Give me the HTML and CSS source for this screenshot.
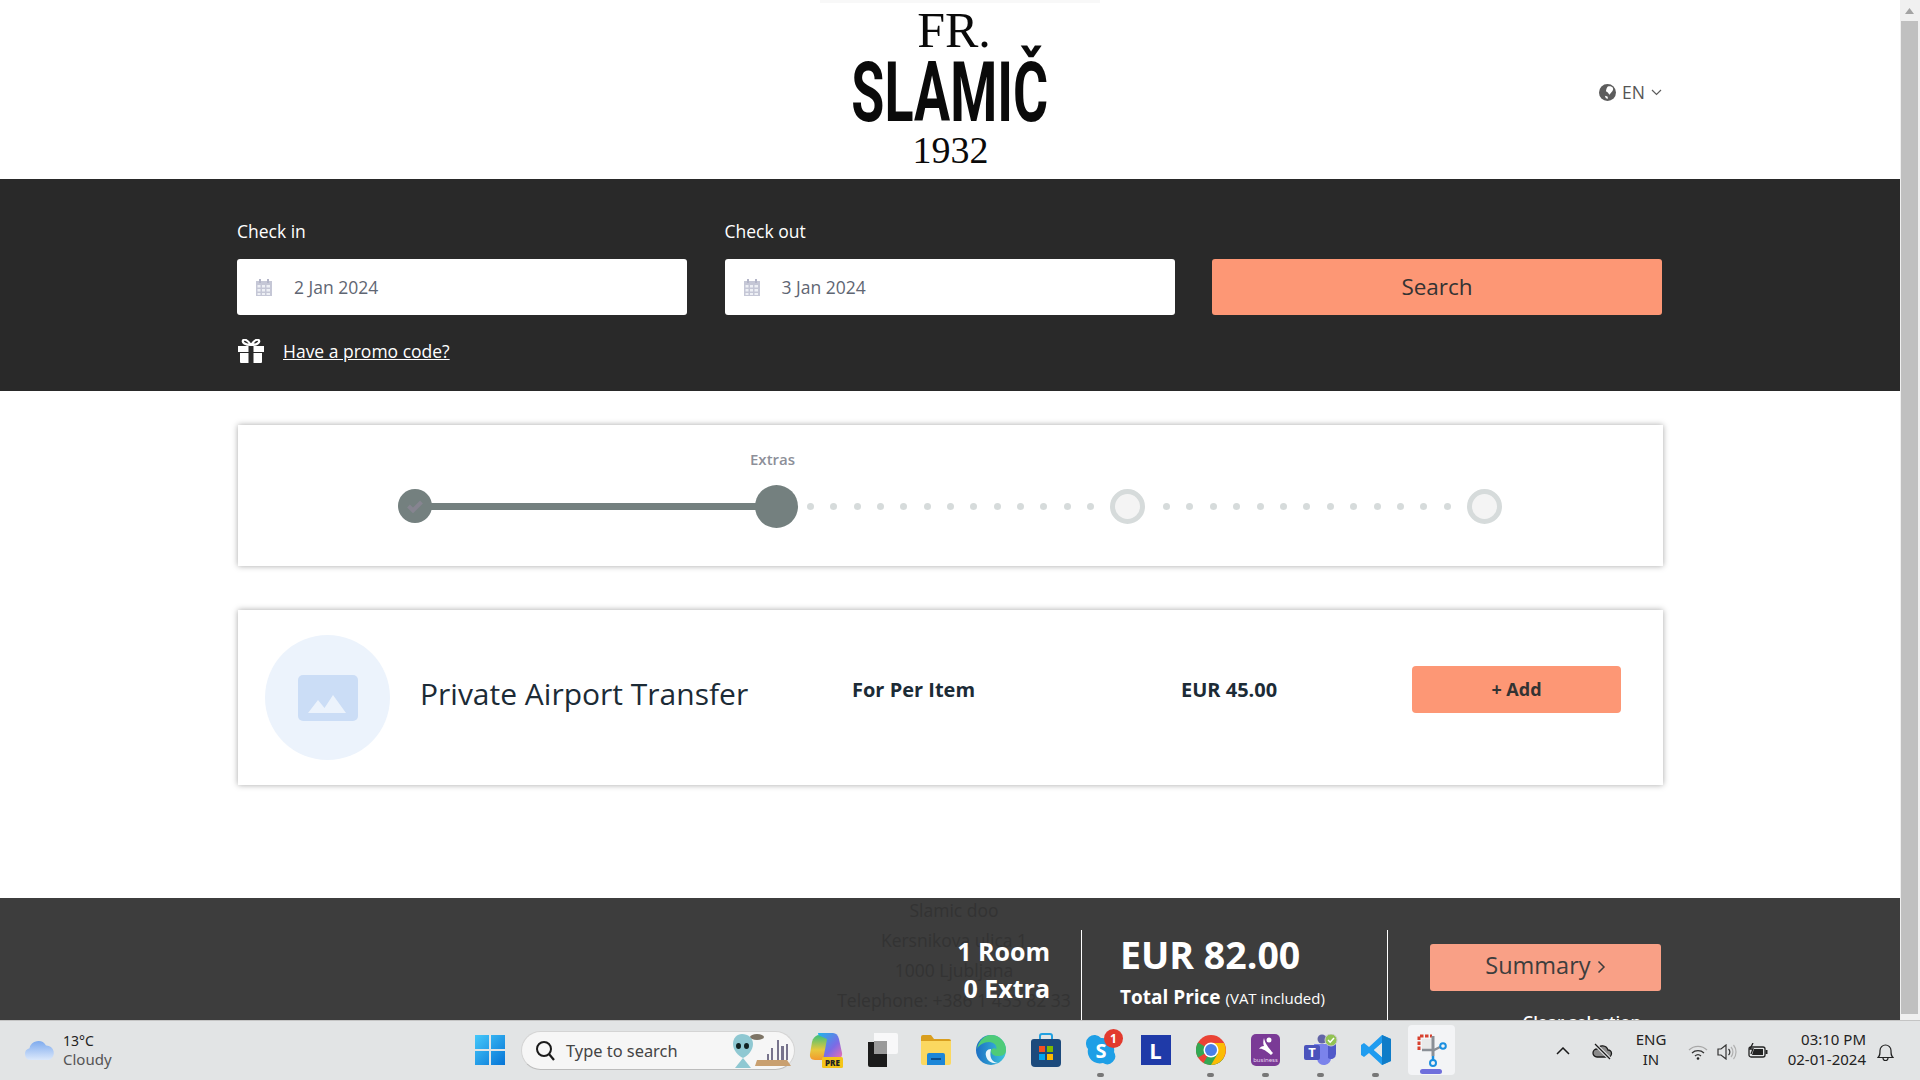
FILE: index.html
```html
<!DOCTYPE html>
<html lang="en">
<head>
  <meta charset="UTF-8" />
  <title>Fr. Slamič 1932 - Booking</title>
  <link rel="stylesheet" href="styles.css">
</head>
<body>
  <div class="viewport">
    <div class="page">
      <header class="top">
        <div class="logo">
          <div class="logo-fr">FR.</div>
          <div class="logo-name"><span>SLAMIČ</span></div>
          <div class="logo-year">1932</div>
        </div>
        <div class="lang">
          <svg width="17" height="17" viewBox="0 0 16 16"><circle cx="8" cy="8" r="8" fill="#5c5c5c"/><path d="M8 2.5c2-.8 4-.4 5 1 .7 1.4.2 3-1.5 4.5L9.8 10 8.300 8 6.500 6.800 7 4.500zM5.500 11l2.500.8.500 2-2-.3z" fill="#fff"/></svg>
          <span>EN</span>
          <svg width="11" height="7" viewBox="0 0 11 7"><path d="M1 1l4.500 4.500L10 1" fill="none" stroke="#5c5c5c" stroke-width="1.200"/></svg>
        </div>
      </header>

      <section class="search">
        <div class="search-row">
          <div class="field">
            <label>Check in</label>
            <div class="date-input">
              <svg class="cal" width="18" height="18" viewBox="0 0 18 18"><path d="M1 3h16v15H1z" fill="#c5c7d6"/><path d="M4 1h2v4H4zM12 1h2v4h-2z" fill="#b3b5c8"/><path d="M2.500 7h3v2.500h-3zM7 7h3v2.500H7zM11.500 7h3.500v2.500h-3.500zM2.500 11h3v2.500h-3zM7 11h3v2.500H7zM11.500 11h3.500v2.500h-3.500zM2.500 15h3v2h-3zM7 15h3v2H7zM11.500 15h3.500v2h-3.500z" fill="#eef0f5"/></svg>
              <span>2 Jan 2024</span>
            </div>
          </div>
          <div class="field">
            <label>Check out</label>
            <div class="date-input">
              <svg class="cal" width="18" height="18" viewBox="0 0 18 18"><path d="M1 3h16v15H1z" fill="#c5c7d6"/><path d="M4 1h2v4H4zM12 1h2v4h-2z" fill="#b3b5c8"/><path d="M2.500 7h3v2.500h-3zM7 7h3v2.500H7zM11.500 7h3.500v2.500h-3.500zM2.500 11h3v2.500h-3zM7 11h3v2.500H7zM11.500 11h3.500v2.500h-3.500zM2.500 15h3v2h-3zM7 15h3v2H7zM11.500 15h3.500v2h-3.500z" fill="#eef0f5"/></svg>
              <span>3 Jan 2024</span>
            </div>
          </div>
          <button class="search-btn">Search</button>
        </div>
        <div class="promo">
          <svg width="28" height="24" viewBox="0 0 28 24"><path d="M1 7h26v6H1zM3 14h22v9a1 1 0 0 1-1 1H4a1 1 0 0 1-1-1z" fill="#fff"/><path d="M11.500 7h5v17h-5z" fill="#292929"/><path d="M14 6C11 1 7-.5 6 1.500S8 6 14 6zM14 6c3-5 7-6.500 8-4.500S20 6 14 6z" fill="none" stroke="#fff" stroke-width="2.200"/></svg>
          <a href="#">Have a promo code?</a>
        </div>
      </section>

      <main class="content">
        <div class="card steps">
          <div class="step-label">Extras</div>
          <div class="track">
            <div class="step-done">
              <svg width="18" height="14" viewBox="0 0 18 14"><path d="M2.500 7l4.500 4.500L15.500 3" fill="none" stroke="#868490" stroke-width="4"/></svg>
            </div>
            <div class="bar"></div>
            <div class="step-now"></div>
            <div class="dots"><i></i><i></i><i></i><i></i><i></i><i></i><i></i><i></i><i></i><i></i><i></i><i></i><i></i></div>
            <div class="step-next"></div>
            <div class="dots dots-wide"><i></i><i></i><i></i><i></i><i></i><i></i><i></i><i></i><i></i><i></i><i></i><i></i><i></i></div>
            <div class="step-next"></div>
          </div>
        </div>

        <div class="card extra">
          <div class="thumb">
            <svg width="60" height="46" viewBox="0 0 60 46"><rect width="60" height="46" rx="5" fill="#cbddf6"/><path d="M10 38l10-13 6.500 8L35 20l13 18z" fill="#ecf3fc"/></svg>
          </div>
          <div class="extra-name">Private Airport Transfer</div>
          <div class="extra-per">For Per Item</div>
          <div class="extra-price">EUR 45.00</div>
          <button class="add-btn">+ Add</button>
        </div>
      </main>

      <footer class="foot">
        <div class="address">
          <p>Slamic doo</p>
          <p>Kersnikova ulica 1</p>
          <p>1000 Ljubljana</p>
          <p>Telephone: +386 1 433 82 33</p>
        </div>
        <div class="summary">
          <div class="counts">
            <div>1 Room</div>
            <div>0 Extra</div>
          </div>
          <div class="total">
            <div class="total-amount">EUR 82.00</div>
            <div class="total-label">Total Price <small>(VAT included)</small></div>
          </div>
          <div class="actions">
            <button class="summary-btn">Summary <svg width="9" height="14" viewBox="0 0 9 14"><path d="M1.500 1.500L7 7l-5.500 5.500" fill="none" stroke="#3d3d3d" stroke-width="1.500"/></svg></button>
            <div class="clear">Clear selection</div>
          </div>
        </div>
      </footer>
    </div>

    <div class="scrollbar">
      <div class="scroll-arrow"><svg width="9" height="6" viewBox="0 0 9 6"><path d="M4.500 0L9 6H0z" fill="#a3a3a3"/></svg></div>
      <div class="scroll-thumb"></div>
    </div>
  </div>

  <div class="taskbar">
    <div class="weather">
      <svg width="32" height="24" viewBox="0 0 32 24"><defs><linearGradient id="cl" x1="0" y1="0" x2="0" y2="1"><stop offset="0" stop-color="#7fabee"/><stop offset="1" stop-color="#dbe8fb"/></linearGradient></defs><path d="M7 22a6 6 0 0 1-1.500-11.800A9 9 0 0 1 22 7.500 7.500 7.500 0 0 1 25 22z" fill="url(#cl)"/></svg>
      <div class="weather-text"><div>13°C</div><div class="weather-sub">Cloudy</div></div>
    </div>

    <div class="task-center">
      <svg class="win" width="30" height="30" viewBox="0 0 30 30"><defs><linearGradient id="wn" x1="0" y1="0" x2="1" y2="1"><stop offset="0" stop-color="#45c8fa"/><stop offset="1" stop-color="#0674d6"/></linearGradient></defs><path d="M0 0h14v14H0zM16 0h14v14H16zM0 16h14v14H0zM16 16h14v14H16z" fill="url(#wn)"/></svg>
      <div class="task-search">
        <svg width="20" height="21" viewBox="0 0 20 21"><circle cx="9" cy="9" r="7" fill="none" stroke="#1a1a1a" stroke-width="2"/><path d="M14 14l5 6" stroke="#1a1a1a" stroke-width="2.200"/></svg>
        <span>Type to search</span>
        <svg class="alien" width="62" height="36" viewBox="0 0 62 36"><path d="M24 34h36l-4-6H26z" fill="#c9a070"/><path d="M40 28V16h2v12zM46 28V8h2v20zM50 28V14h3v14zM55 28V12h2v16zM36 28v-6h2v6z" fill="#77738c"/><ellipse cx="26" cy="5" rx="7" ry="3" fill="#7d7466"/><path d="M11 2c6 0 11 4 11 10 0 6-5 12-10 14-5-2-10-8-10-14C2 6 6 2 11 2z" fill="#8fc8d2"/><ellipse cx="7.500" cy="14" rx="2.500" ry="3" fill="#122"/><ellipse cx="15.500" cy="14" rx="2.500" ry="3" fill="#122"/><path d="M4 36l8-10 8 10z" fill="#8fc8d2"/></svg>
      </div>
      <div class="task-icons">
        <div class="task-icon">
          <svg width="34" height="36" viewBox="0 0 34 36"><defs><linearGradient id="cpa" x1="0" y1="0" x2="1" y2="1"><stop offset="0" stop-color="#1fb5e8"/><stop offset=".6" stop-color="#7b6be6"/><stop offset="1" stop-color="#ee6fb0"/></linearGradient><linearGradient id="cpb" x1="0" y1="0" x2="0" y2="1"><stop offset="0" stop-color="#3cc07a"/><stop offset=".6" stop-color="#e8c83c"/><stop offset="1" stop-color="#f29a2e"/></linearGradient></defs><path d="M9 1h15c3 0 5 2 6 6l3 14c.5 3-1 5-4 5H14z" fill="url(#cpa)"/><path d="M9 3c-3 1-5 3-6 7L1 22c-.5 3 1 6 5 6h8L18 7z" fill="url(#cpb)"/><rect x="13" y="25" width="21" height="11" rx="1.500" fill="#f5c518"/><text x="23.500" y="34" class="pre">PRE</text></svg>
        </div>
        <div class="task-icon task-view">
          <svg width="30" height="34" viewBox="0 0 30 34"><path d="M0 9h19v25H2a2 2 0 0 1-2-2z" fill="#1b1b1b"/><path d="M6 0h22a2 2 0 0 1 2 2v17a2 2 0 0 1-2 2H6z" fill="#fff" fill-opacity=".75"/><path d="M6 8h13v13H6z" fill="#9a9a9a"/></svg>
        </div>
        <div class="task-icon">
          <svg width="30" height="30" viewBox="0 0 30 30"><path d="M0 2a2 2 0 0 1 2-2h8l3 4h15a2 2 0 0 1 2 2v2H0z" fill="#d99e1e"/><path d="M0 6h30v22a2 2 0 0 1-2 2H2a2 2 0 0 1-2-2z" fill="#fbd860"/><path d="M8 18h14a2 2 0 0 1 2 2v10H6V20a2 2 0 0 1 2-2z" fill="#1c86d8"/><path d="M10 23h10v2H10z" fill="#0b4d8c"/></svg>
        </div>
        <div class="task-icon">
          <svg width="30" height="30" viewBox="0 0 30 30"><defs><linearGradient id="eg" x1="0" y1="0" x2="1" y2="0"><stop offset="0" stop-color="#1c6fc4"/><stop offset="1" stop-color="#3dc4dc"/></linearGradient></defs><circle cx="15" cy="15" r="15" fill="url(#eg)"/><path d="M15 0a15 15 0 0 1 15 15c0 5-4 6-8 6-4 0-7-2-7-5s5-4 5-1c2-4-2-8-7-8C8 7 3 10 1 14 3 5 9 0 15 0z" fill="#4ecb78"/><path d="M15 14c-4 0-6 3-5 7 1 5 6 8 12 7-6-1-9-5-7-14z" fill="#fff" fill-opacity=".9"/></svg>
        </div>
        <div class="task-icon">
          <svg width="30" height="34" viewBox="0 0 30 34"><path d="M9 6V3a2 2 0 0 1 2-2h8a2 2 0 0 1 2 2v3" fill="none" stroke="#22a0e0" stroke-width="2"/><path d="M3 6h24a3 3 0 0 1 3 3v21a4 4 0 0 1-4 4H4a4 4 0 0 1-4-4V9a3 3 0 0 1 3-3z" fill="#1c4a7c"/><path d="M8 13h6v6H8z" fill="#f25022"/><path d="M16 13h6v6h-6z" fill="#7fba00"/><path d="M8 21h6v6H8z" fill="#00a4ef"/><path d="M16 21h6v6h-6z" fill="#ffb900"/></svg>
        </div>
        <div class="task-icon has-run">
          <svg class="skype" width="30" height="32" viewBox="0 0 30 32"><path d="M15 4a12 12 0 0 1 13 14 8 8 0 0 1-11 11A12 12 0 0 1 2 15 8 8 0 0 1 15 4z" fill="#1e9fe6"/><text x="15" y="24" class="skype-s">S</text></svg>
          <span class="badge">1</span>
        </div>
        <div class="task-icon">
          <div class="l-app">L</div>
        </div>
        <div class="task-icon has-run">
          <svg width="30" height="30" viewBox="0 0 30 30"><circle cx="15" cy="15" r="15" fill="#ea4335"/><path d="M15 15L2 22.500A15 15 0 0 1 2 7.500z" fill="#34a853"/><path d="M15 15l13 7.500A15 15 0 0 1 7.500 28z" fill="#34a853"/><path d="M15 8h13a15 15 0 0 1-13 22l6.500-11z" fill="#fbbc05"/><circle cx="15" cy="15" r="7.500" fill="#fff"/><circle cx="15" cy="15" r="6" fill="#4a80e8"/></svg>
        </div>
        <div class="task-icon has-run">
          <div class="biz-app">
            <svg width="20" height="20" viewBox="0 0 20 20"><circle cx="13" cy="3" r="2.500" fill="#fff"/><path d="M8 1c1 4 2 7 9 15l-2 2C9 13 6 11 3 12c1-2 3-3 5-3-1-2-1-5 0-8z" fill="#fff"/></svg>
            <span>business</span>
          </div>
        </div>
        <div class="task-icon has-run">
          <svg width="34" height="32" viewBox="0 0 34 32"><circle cx="18" cy="5" r="4.500" fill="#6264a7"/><path d="M10 10h14a3 3 0 0 1 3 3v10a7 7 0 0 1-14 2z" fill="#7b83eb"/><path d="M24 10h7a1 1 0 0 1 1 1v9a5 5 0 0 1-8 4z" fill="#5059c9"/><rect x="0" y="11" width="16" height="15" rx="2" fill="#4b53bc"/><text x="8" y="23" class="teams-t">T</text><circle cx="27" cy="6" r="6" fill="#92c353" stroke="#c9c9c9" stroke-width="1"/><path d="M24 6l2.200 2.200L30 4" fill="none" stroke="#fff" stroke-width="1.500"/></svg>
        </div>
        <div class="task-icon has-run">
          <svg width="30" height="30" viewBox="0 0 30 30"><path d="M21 0l9 4v22l-9 4L8 18l-5 4-3-2V10l3-2 5 4zM21 8l-8 7 8 7z" fill="#1f9cf0"/><path d="M21 0l9 4v22l-9 4z" fill="#0f7cc8"/><path d="M21 8l-8 7 8 7z" fill="#e4e7e7"/></svg>
        </div>
        <div class="task-icon active">
          <svg width="30" height="34" viewBox="0 0 30 34"><path d="M2 17V3h13" fill="none" stroke="#d8412f" stroke-width="3" stroke-dasharray="3.500 1.500"/><path d="M5 6h11v11H5z" fill="#e9e9e9"/><path d="M16 3v20" stroke="#8a8f96" stroke-width="3"/><path d="M5 17h12l6-3" fill="none" stroke="#8a8f96" stroke-width="2.500"/><circle cx="26" cy="13" r="2.800" fill="none" stroke="#1a8fe0" stroke-width="2"/><path d="M16 23v4" stroke="#1a8fe0" stroke-width="2.500"/><circle cx="16" cy="30" r="3" fill="none" stroke="#1a8fe0" stroke-width="2"/></svg>
          <span class="active-bar"></span>
        </div>
      </div>
    </div>

    <div class="tray">
      <svg width="14" height="8" viewBox="0 0 14 8"><path d="M1 7l6-6 6 6" fill="none" stroke="#1a1a1a" stroke-width="1.500"/></svg>
      <svg class="tray-cloud" width="21" height="17" viewBox="0 0 21 17"><path d="M5 14a4 4 0 0 1 0-8 6 6 0 0 1 11 1 3.500 3.500 0 0 1 0 7z" fill="#8a8a8a" stroke="#1a1a1a" stroke-width="1.300"/><path d="M3 1l15 15" stroke="#e2e4e5" stroke-width="3.500"/><path d="M3 1l15 15" stroke="#1a1a1a" stroke-width="1.200"/></svg>
      <div class="tray-lang"><div>ENG</div><div>IN</div></div>
      <svg class="tray-wifi" width="20" height="15" viewBox="0 0 20 15"><path d="M1 5a13 13 0 0 1 18 0" fill="none" stroke="#a8a8a8" stroke-width="1.300"/><path d="M4 8a9 9 0 0 1 12 0" fill="none" stroke="#333" stroke-width="1.300"/><path d="M7 11a4.500 4.500 0 0 1 6 0" fill="none" stroke="#333" stroke-width="1.300"/><circle cx="10" cy="13.500" r="1.300" fill="#222"/></svg>
      <svg class="tray-vol" width="20" height="16" viewBox="0 0 20 16"><path d="M1 5h3l5-4v14l-5-4H1z" fill="none" stroke="#333" stroke-width="1.200"/><path d="M11.500 5a4 4 0 0 1 0 6" fill="none" stroke="#333" stroke-width="1.200"/><path d="M14 3a7.500 7.500 0 0 1 0 10M16.500 1a11 11 0 0 1 0 14" fill="none" stroke="#b0b0b0" stroke-width="1.200"/></svg>
      <svg class="tray-bat" width="20" height="16" viewBox="0 0 20 16"><rect x="1" y="4" width="16" height="10" rx="2" fill="#e2e4e5" stroke="#222" stroke-width="1.300"/><path d="M6 6h9v6H4z" fill="#222"/><path d="M17.500 7h2v4h-2z" fill="#222"/><path d="M5 0L2 6h3l-2 5" fill="none" stroke="#222" stroke-width="1.300"/></svg>
      <div class="clock"><div>03:10 PM</div><div>02-01-2024</div></div>
      <svg class="bell" width="17" height="19" viewBox="0 0 17 19"><path d="M1 14.500c2-2 2-3 2-7a5.500 5.500 0 0 1 11 0c0 4 0 5 2 7zM6 15a2.500 2.500 0 0 0 5 0" fill="none" stroke="#222" stroke-width="1.200"/></svg>
    </div>
  </div>
</body>
</html>
```

FILE: styles.css
```css
* {
  box-sizing: border-box;
}

body {
  margin: 0;
  height: 100vh;
  display: flex;
  flex-direction: column;
  overflow: hidden;
  font-family: 'Open Sans', sans-serif;
  background-color: #fff;
  color: #333;
}

button {
  font-family: inherit;
  border: none;
  cursor: pointer;
}

.viewport {
  flex: 1;
  display: flex;
  min-height: 0;
}

.page {
  flex: 1;
  min-width: 0;
  display: flex;
  flex-direction: column;
}

/* header */
.top {
  height: 179px;
  flex-shrink: 0;
  display: flex;
  justify-content: center;
  position: relative;
}

.top::before {
  content: "";
  position: absolute;
  top: 0;
  left: 820px;
  width: 280px;
  height: 3px;
  background-color: #f8f8f8;
}

.logo {
  color: #0a0a0a;
  text-align: center;
  width: 200px;
  margin-left: -1px;
}

.logo-fr {
  font-family: 'Liberation Serif', serif;
  font-size: 50px;
  line-height: 40px;
  margin-top: 10px;
  margin-left: 9px;
}

.logo-name {
  font-family: Roboto, sans-serif;
  font-weight: 700;
  font-size: 84px;
  line-height: 66px;
  margin-top: 10px;
  height: 66px;
  white-space: nowrap;
}

.logo-name span {
  display: inline-block;
  transform: scaleX(0.64);
  transform-origin: center;
  margin: 0 -60px;
}

.logo-year {
  font-family: 'Liberation Serif', serif;
  font-size: 38px;
  line-height: 30px;
  margin-top: 9px;
  margin-left: 2px;
}

.lang {
  position: absolute;
  top: 81px;
  left: 1599px;
  display: flex;
  align-items: center;
  gap: 6px;
  font-size: 17.5px;
  line-height: 22px;
  color: #555;
}

/* search band */
.search {
  height: 212px;
  flex-shrink: 0;
  background-color: #292929;
  padding: 41px 238px 0 237px;
  color: #fff;
}

.search-row {
  display: grid;
  grid-template-columns: 450px 450px 450px;
  gap: 37.5px;
  align-items: end;
}

.field label {
  display: block;
  font-size: 17.5px;
  line-height: 22px;
  margin-bottom: 17px;
}

.date-input {
  height: 56px;
  background-color: #fff;
  border-radius: 3px;
  display: flex;
  align-items: center;
  padding-left: 18px;
  gap: 21px;
  color: #5f6673;
  font-size: 17.5px;
}

.search-btn {
  height: 56px;
  padding-bottom: 3px;
  background-color: #fd9775;
  border-radius: 3px;
  color: #333;
  font-size: 22.5px;
}

.promo {
  display: flex;
  align-items: center;
  gap: 18px;
  margin-top: 24px;
}

.promo a {
  color: #fff;
  font-size: 17.5px;
  line-height: 24px;
}

/* main */
.content {
  flex: 1;
  padding: 34px 237px 0 238px;
  display: flex;
  flex-direction: column;
  gap: 44px;
}

.card {
  background-color: #fff;
  box-shadow: 0 0 6px rgba(0, 0, 0, 0.35);
}

.steps {
  height: 141px;
  padding-top: 24px;
}

.step-label {
  font-size: 15px;
  font-weight: 600;
  line-height: 20px;
  color: #8d8f99;
  margin-left: 512px;
}

.track {
  display: flex;
  align-items: center;
  margin-left: 160px;
  margin-top: 15px;
  height: 44px;
}

.step-done {
  width: 34px;
  height: 34px;
  border-radius: 50%;
  background-color: #74807f;
  display: flex;
  align-items: center;
  justify-content: center;
  flex-shrink: 0;
}

.bar {
  width: 327px;
  height: 7px;
  background-color: #74807f;
  margin: 0 -2px;
}

.step-now {
  width: 43px;
  height: 43px;
  border-radius: 50%;
  background-color: #74807f;
  flex-shrink: 0;
}

.dots {
  display: flex;
  justify-content: space-between;
  align-items: center;
  width: 312px;
  padding: 0 16px 0 9px;
}

.dots-wide {
  width: 322px;
  padding: 0 16px 0 18px;
}

.dots i {
  width: 7px;
  height: 7px;
  border-radius: 50%;
  background-color: #d6dbdb;
}

.step-next {
  width: 35px;
  height: 35px;
  border-radius: 50%;
  border: 5px solid #d6dbdb;
  background-color: #f4f4f4;
  flex-shrink: 0;
}

.extra {
  height: 175px;
  display: flex;
  align-items: center;
  padding-left: 27px;
}

.thumb {
  width: 125px;
  height: 125px;
  border-radius: 50%;
  background-color: #ecf3fc;
  display: flex;
  align-items: center;
  justify-content: center;
  flex-shrink: 0;
}

.extra-name {
  font-size: 30px;
  color: #1c2b36;
  width: 432px;
  margin-left: 30px;
  margin-top: -9px;
}

.extra-per {
  font-size: 20px;
  font-weight: 700;
  color: #1c2b36;
  width: 329px;
  margin-top: -17px;
}

.extra-price {
  font-size: 20px;
  font-weight: 700;
  color: #1c2b36;
  width: 231px;
  margin-top: -17px;
}

.add-btn {
  width: 209px;
  height: 47px;
  background-color: #fd9775;
  border-radius: 4px;
  color: #333;
  font-size: 18px;
  font-weight: 700;
  margin-top: -17px;
}

/* footer, cut off by the taskbar */
.foot {
  height: 122px;
  flex-shrink: 0;
  background-color: #3d3d3d;
  position: relative;
  overflow: hidden;
}

.address {
  text-align: center;
  color: #333;
  font-size: 17.5px;
  margin-top: -3px;
  width: 1908px;
}

.address p {
  margin: 0;
  line-height: 30px;
}

.summary {
  position: absolute;
  top: 32px;
  left: 0;
  right: 0;
  height: 100px;
  display: flex;
  color: #fff;
}

.counts {
  width: 1082px;
  border-right: 1px solid #fff;
  padding: 3px 31px 0 0;
  text-align: right;
  font-size: 25px;
  font-weight: 700;
  line-height: 37px;
}

.total {
  width: 306px;
  border-right: 1px solid #fff;
  padding-left: 38px;
}

.total-amount {
  font-size: 37.5px;
  font-weight: 700;
  line-height: 50px;
}

.total-label {
  font-size: 19px;
  font-weight: 700;
  line-height: 24px;
  margin-top: 5px;
}

.total-label small {
  font-size: 15px;
  font-weight: 400;
}

.actions {
  padding-left: 42px;
  width: 273px;
}

.summary-btn {
  display: block;
  width: 231px;
  height: 47px;
  margin-top: 14px;
  padding-bottom: 7px;
  background-color: #f9a086;
  border-radius: 3px;
  color: #3d3d3d;
  font-size: 23.5px;
}

.clear {
  font-size: 16.7px;
  font-weight: 600;
  text-align: right;
  white-space: nowrap;
  line-height: 22px;
  margin-top: 20px;
  margin-right: 20px;
}

/* scrollbar */
.scrollbar {
  width: 20px;
  flex-shrink: 0;
  background-color: #f0f0f0;
  padding: 0 2px 0 1px;
  display: flex;
  flex-direction: column;
}

.scroll-arrow {
  height: 21px;
  display: flex;
  align-items: center;
  justify-content: center;
}

.scroll-thumb {
  flex: 1;
  background-color: #c0c0c0;
  margin-bottom: 6px;
}

/* windows taskbar */
.taskbar {
  height: 60px;
  flex-shrink: 0;
  background-color: #e2e4e5;
  border-top: 1px solid #c4c4c4;
  display: flex;
  align-items: center;
  position: relative;
  font-family: 'Noto Sans', sans-serif;
  color: #222;
}

.weather {
  display: flex;
  align-items: center;
  gap: 7px;
  padding-left: 24px;
  width: 475px;
  font-size: 14px;
  line-height: 19px;
  margin-top: -2px;
}

.weather-sub {
  color: #555;
  font-size: 15px;
}

.task-center {
  display: flex;
  align-items: center;
  margin-top: -1px;
}

.win {
  flex-shrink: 0;
}

.task-search {
  width: 274px;
  height: 39px;
  margin-left: 16px;
  background-color: #f6f6f6;
  border: 1px solid #d4d4d4;
  border-bottom-color: #bcbcbc;
  border-radius: 20px;
  display: flex;
  align-items: center;
  padding-left: 13px;
  font-size: 16.4px;
  color: #444;
}

.task-search span {
  margin-left: 11px;
}

.alien {
  margin-left: auto;
  margin-right: 1px;
}

.task-icons {
  display: flex;
  align-items: center;
  margin-left: 3px;
}

.task-icon {
  width: 55px;
  height: 50px;
  display: flex;
  align-items: center;
  justify-content: center;
  position: relative;
}

.task-view {
  padding-left: 5px;
}

.has-run::after {
  content: "";
  position: absolute;
  bottom: -2px;
  left: 24px;
  width: 7px;
  height: 4px;
  border-radius: 2px;
  background-color: #777;
}

.task-icon.active {
  background-color: #f3f4f6;
  border-radius: 4px;
  width: 47px;
  margin-left: 5px;
}

.active-bar {
  position: absolute;
  bottom: 1px;
  left: 12px;
  width: 22px;
  height: 5px;
  border-radius: 3px;
  background-color: #6f6fdc;
}

.badge {
  position: absolute;
  top: 4px;
  right: 5px;
  width: 19px;
  height: 19px;
  border-radius: 50%;
  background-color: #e23a2e;
  color: #fff;
  font-size: 12px;
  font-weight: 700;
  text-align: center;
  line-height: 19px;
}

.skype-s {
  font-family: 'Open Sans', sans-serif;
  font-size: 20px;
  font-weight: 700;
  fill: #fff;
  text-anchor: middle;
}

.pre {
  font-family: 'Open Sans', sans-serif;
  font-size: 8px;
  font-weight: 800;
  fill: #222;
  text-anchor: middle;
}

.teams-t {
  font-family: 'Open Sans', sans-serif;
  font-size: 13px;
  font-weight: 700;
  fill: #fff;
  text-anchor: middle;
}

.l-app {
  width: 30px;
  height: 30px;
  background-color: #1f3aa8;
  color: #fff;
  font-family: 'Open Sans', sans-serif;
  font-size: 22px;
  font-weight: 700;
  text-align: center;
  line-height: 30px;
}

.biz-app {
  width: 29px;
  height: 32px;
  border-radius: 5px;
  background-color: #7a3a96;
  display: flex;
  flex-direction: column;
  align-items: center;
  padding-top: 3px;
}

.biz-app span {
  font-size: 6px;
  line-height: 7px;
  color: #e6d8ee;
}

.tray {
  position: absolute;
  left: 0;
  right: 0;
  top: 0;
  bottom: 0;
  pointer-events: none;
}

.tray > * {
  position: absolute;
}

.tray > svg:nth-child(1) { left: 1556px; top: 26px; }
.tray-cloud { left: 1592px; top: 22px; }
.tray-lang { left: 1628px; top: 8px; width: 46px; text-align: center; font-size: 15px; line-height: 20px; }
.tray-wifi { left: 1688px; top: 24px; }
.tray-vol { left: 1717px; top: 23px; }
.tray-bat { left: 1748px; top: 22px; }
.clock { left: 1770px; top: 8px; width: 96px; text-align: right; font-size: 15px; line-height: 20px; }
.bell { left: 1877px; top: 22px; }
```
